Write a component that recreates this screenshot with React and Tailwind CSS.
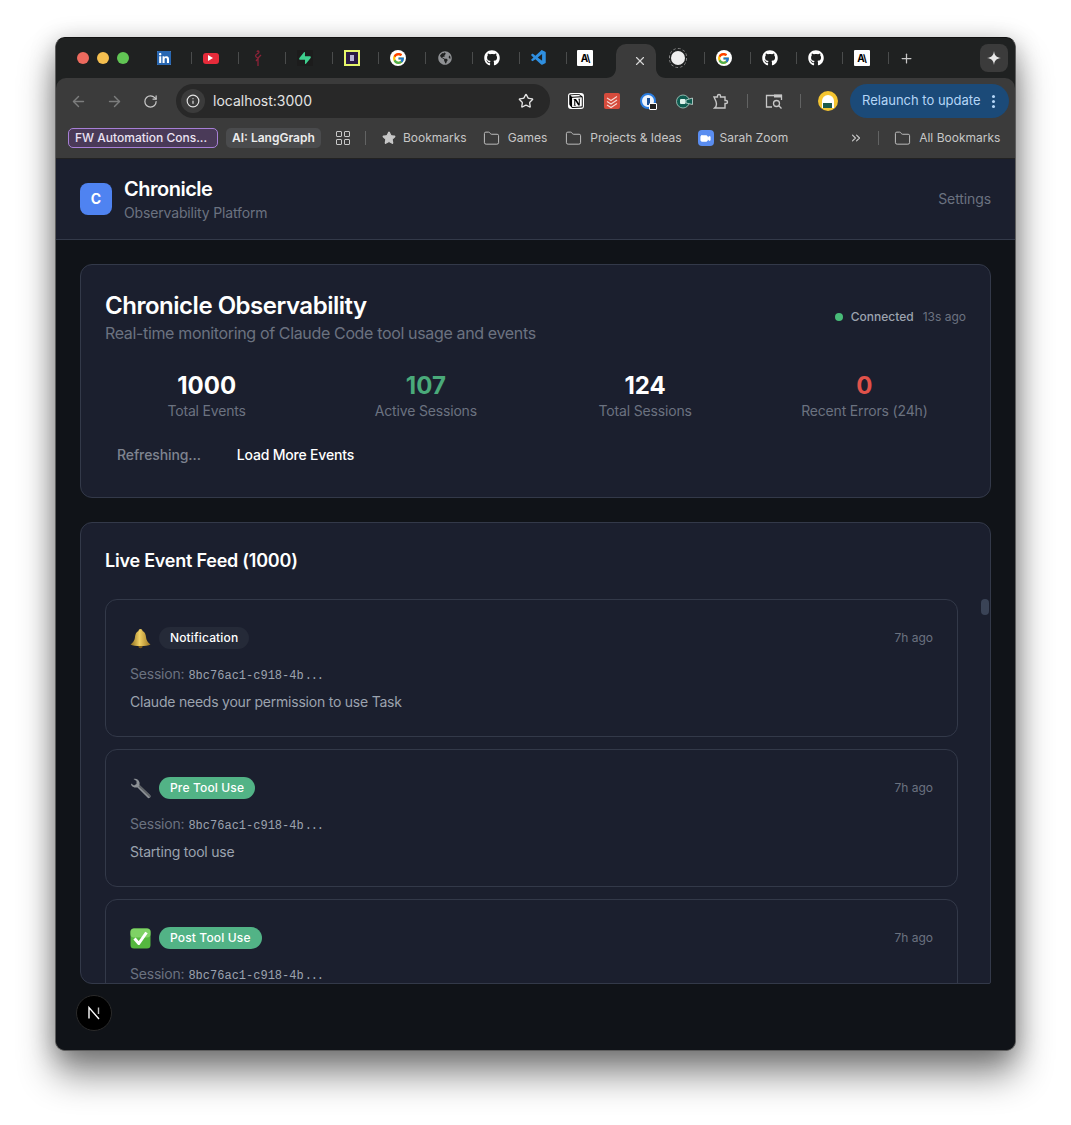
import { ArrowLeft, ArrowRight, RotateCw, Info, Star, Folder, X, Plus, ChevronsRight, Video } from "lucide-react";
import { FaGithub, FaLinkedin, FaGlobeAmericas } from "react-icons/fa";
import { FcGoogle } from "react-icons/fc";
import { SiSupabase, SiNotion } from "react-icons/si";
import { VscVscode } from "react-icons/vsc";

const Youtube = () => (
  <div className="w-4 h-[11px] rounded-[3px] bg-[#e62b3a] flex items-center justify-center">
    <div className="w-0 h-0 border-y-[3px] border-y-transparent border-l-[5px] border-l-white" />
  </div>
);

const Flamingo = () => (
  <svg width="12" height="18" viewBox="0 0 12 18" fill="none" stroke="#8c2338" strokeWidth="1.3">
    <path d="M6 17V9M6.5 9 4 12M6 9C3 8 3 6 5 5L6.5 4C7.5 3 6.5 1.5 5.5 2L5 3" />
    <path d="M6 9 9 6" />
  </svg>
);

const Anthropic = () => (
  <div className="w-4 h-4 rounded-[1px] bg-white text-black flex items-center justify-center text-[10px] font-bold leading-none tracking-[-1px]">
    A\
  </div>
);

const GoogleFav = () => (
  <div className="w-4 h-4 bg-white rounded-full flex items-center justify-center">
    <FcGoogle className="text-[13px]" />
  </div>
);

// tab strip favicon + the divider on its right
const Tab = ({ children, w = "w-[46.9px]", pl = "pl-[10px]", sep = true }) => (
  <div className={`${w} ${pl} h-full flex items-center relative`}>
    <div className="w-[18px] flex justify-center">{children}</div>
    {sep && <div className="absolute right-0 top-[14px] w-px h-[12px] bg-[#4a4c4c]" />}
  </div>
);

const TabStrip = () => (
  <div className="h-[40px] shrink-0 bg-[#1f2121] flex items-end pl-[21px]">
    <div className="h-full flex items-center gap-2 w-[68px] shrink-0">
      <div className="w-3 h-3 rounded-full bg-[#ed6a5e]" />
      <div className="w-3 h-3 rounded-full bg-[#f5bf4f]" />
      <div className="w-3 h-3 rounded-full bg-[#61c554]" />
    </div>
    <div className="h-full flex">
      <Tab><div className="w-[14px] h-[14px] bg-white rounded-[1px] flex items-center justify-center"><FaLinkedin className="text-[#2867b2] text-[16px]" /></div></Tab>
      <Tab><Youtube /></Tab>
      <Tab><Flamingo /></Tab>
      <Tab><div className="w-4 h-4 bg-[#1c1c1c] flex items-center justify-center"><SiSupabase className="text-[#3ecf8e] text-[12px]" /></div></Tab>
      <Tab><div className="w-4 h-4 bg-[#2a1a45] border-2 border-[#e6f56a] flex items-center justify-center"><div className="w-1 h-[6px] bg-[#b9b4d6]" /></div></Tab>
      <Tab><GoogleFav /></Tab>
      <Tab><FaGlobeAmericas className="text-[#8e9093] text-[14px]" /></Tab>
      <Tab><FaGithub className="text-white text-[16px]" /></Tab>
      <Tab><VscVscode className="text-[#2f8fe0] text-[18px]" /></Tab>
      <Tab pl="pl-[9px]" w="w-[48.6px]" sep={false}><Anthropic /></Tab>
    </div>
    <div className="relative w-[40px] h-[34px] bg-[#3b3b3b] rounded-t-[10px] flex items-center justify-end pr-[9px] shrink-0">
      <X size={14} strokeWidth={2} className="text-[#d6d6d6]" />
      <svg className="absolute -left-[10px] bottom-0" width="10" height="10" viewBox="0 0 10 10"><path d="M10 0V10H0C6 10 10 6 10 0Z" fill="#3b3b3b" /></svg>
      <svg className="absolute -right-[10px] bottom-0" width="10" height="10" viewBox="0 0 10 10"><path d="M0 0V10H10C4 10 0 6 0 0Z" fill="#3b3b3b" /></svg>
    </div>
    <div className="h-full flex">
      <Tab w="w-[49px]" pl="pl-[13px]">
        <div className="w-5 h-5 rounded-full border border-dashed border-[#8a8a8a] flex items-center justify-center"><div className="w-[14px] h-[14px] rounded-full bg-[#eeeeee]" /></div>
      </Tab>
      <Tab w="w-[46px]"><GoogleFav /></Tab>
      <Tab w="w-[46px]"><FaGithub className="text-white text-[16px]" /></Tab>
      <Tab w="w-[46px]"><FaGithub className="text-white text-[16px]" /></Tab>
      <Tab w="w-[46px]"><Anthropic /></Tab>
    </div>
    <div className="h-full flex items-center ml-[10px]">
      <Plus size={15} strokeWidth={2} className="text-[#c7c7c7]" />
    </div>
    <div className="ml-auto mr-[7px] mb-[6px] w-[28px] h-[28px] rounded-lg bg-[#3b3b3b] flex items-center justify-center">
      <svg width="14" height="14" viewBox="0 0 14 14">
        <path d="M7 0C7.5 4.5 9.5 6.5 14 7C9.5 7.5 7.5 9.5 7 14C6.5 9.5 4.5 7.5 0 7C4.5 6.5 6.5 4.5 7 0Z" fill="#e8e8e8" />
      </svg>
    </div>
  </div>
);

const ToolSlot = ({ children, w = "w-9" }) => (
  <div className={`${w} h-full flex items-center justify-center shrink-0`}>{children}</div>
);

const Toolbar = () => (
  <div className="h-[46px] shrink-0 bg-[#3b3b3b] rounded-t-[10px] flex items-center pl-[4px]">
    <ToolSlot><ArrowLeft size={17} className="text-[#7c7d7d]" /></ToolSlot>
    <ToolSlot><ArrowRight size={17} className="text-[#7c7d7d]" /></ToolSlot>
    <ToolSlot><RotateCw size={15} className="text-[#c7c7c7]" /></ToolSlot>
    <div className="ml-[8px] w-[374px] h-[34px] rounded-full bg-[#282828] flex items-center pl-[5px] pr-[16px] shrink-0">
      <div className="w-6 h-6 rounded-full bg-[#3b3b3b] flex items-center justify-center">
        <Info size={14} className="text-[#e3e3e3]" />
      </div>
      <span className="ml-[8px] text-sm text-[#e3e3e3]">localhost:3000</span>
      <Star size={16} className="ml-auto text-[#e3e3e3]" />
    </div>
    <div className="w-[8px]" />
    <ToolSlot><div className="w-4 h-4 rounded-[3px] bg-white flex items-center justify-center"><SiNotion className="text-black text-[14px]" /></div></ToolSlot>
    <ToolSlot>
      <svg width="16" height="16" viewBox="0 0 16 16" fill="none">
        <rect width="16" height="16" rx="2" fill="#d64b3c" />
        <path d="M3 5 7 7.5 13 3.5M3 8.5 7 11 13 7M3 12 7 14.5 13 10.5" stroke="#f6d9d4" strokeWidth="1.1" />
      </svg>
    </ToolSlot>
    <ToolSlot>
      <div className="relative w-4 h-4 rounded-full bg-[#eef4fc] border-2 border-[#2a7de1] flex items-center justify-center">
        <div className="w-[3px] h-[7px] bg-[#1b4f94]" />
        <div className="absolute -right-[3px] -bottom-[3px] w-[8px] h-[7px] rounded-[1px] bg-[#222] border border-white" />
      </div>
    </ToolSlot>
    <ToolSlot>
      <svg width="17" height="15" viewBox="0 0 17 15">
        <circle cx="7" cy="7.5" r="6.5" fill="#0f5c50" stroke="#bfe3d8" strokeWidth=".7" />
        <rect x="4" y="5" width="5.5" height="5" rx="1" fill="#dff2ec" />
        <path d="M10 6 16.5 4V10.5L10 9Z" fill="#0f5c50" stroke="#dff2ec" strokeWidth=".7" />
      </svg>
    </ToolSlot>
    <ToolSlot>
      <svg width="17" height="17" viewBox="0 0 17 17" fill="none" stroke="#c7c7c7" strokeWidth="1.4">
        <path d="M2 4H5.5V3C5.5 1 8.5 1 8.5 3V4H13V7.5H14C16 7.5 16 10.5 14 10.5H13V15H2.5L4 13.5C4.6 12 4.6 10 4 8.5Z" />
      </svg>
    </ToolSlot>
    <div className="w-px h-[14px] bg-[#626363] ml-[9px]" />
    <ToolSlot w="w-[52px]">
      <svg width="18" height="17" viewBox="0 0 18 17" fill="none" stroke="#c7c7c7" strokeWidth="1.3">
        <path d="M7 14H1.5V2.5H16.5V7" />
        <rect x="9" y="1.5" width="8" height="3" fill="#c7c7c7" stroke="none" />
        <circle cx="11.5" cy="10.5" r="3" />
        <path d="M13.8 12.8 16.5 15.5" />
      </svg>
    </ToolSlot>
    <div className="w-px h-[14px] bg-[#626363]" />
    <ToolSlot w="w-[49px]">
      <div className="ml-[4px] w-5 h-5 rounded-full bg-[#f5c531] flex items-center justify-center">
        <div className="w-[12px] h-[13px] rounded-t-full rounded-b-[2px] bg-white flex items-end justify-center">
          <div className="w-[9px] h-[5px] bg-[#1e5a4a]" />
        </div>
      </div>
    </ToolSlot>
    <div className="w-[159px] h-[34px] rounded-full bg-[#1b4a78] flex items-center pl-[12px] shrink-0 text-[13px] text-[#b5d6f7]">
      Relaunch to update
      <div className="ml-[11px] flex flex-col gap-[2px]">
        <div className="w-[3px] h-[3px] rounded-full bg-[#b5d6f7]" />
        <div className="w-[3px] h-[3px] rounded-full bg-[#b5d6f7]" />
        <div className="w-[3px] h-[3px] rounded-full bg-[#b5d6f7]" />
      </div>
    </div>
  </div>
);

const Bookmark = ({ icon, label, className = "" }) => (
  <div className={`flex items-center text-xs text-[#c7c7c7] shrink-0 ${className}`}>
    {icon}
    {label}
  </div>
);

const folder = <Folder size={17} strokeWidth={1.3} className="text-[#c7c7c7] mr-[8px]" />;

const BookmarksBar = () => (
  <div className="h-[35px] shrink-0 bg-[#3b3b3b] border-b border-[#222] flex items-center pl-[12px] pb-[6px]">
    <div className="w-[150px] h-[20px] rounded-[5px] bg-[#4a3a58] border border-[#a77fd6] flex items-center pl-[6px] text-xs font-medium text-[#ebe3f2] shrink-0">
      FW Automation Cons...
    </div>
    <div className="ml-[8px] w-[95px] h-[20px] rounded-[5px] bg-[#4a4b4d] flex items-center pl-[6px] text-xs font-semibold text-[#ececec] shrink-0">
      AI: LangGraph
    </div>
    <div className="ml-[15px] w-[14px] h-[14px] grid grid-cols-2 gap-[2px] shrink-0">
      <div className="border-[1.5px] border-[#c7c7c7] rounded-[1px]" />
      <div className="border-[1.5px] border-[#c7c7c7] rounded-[1px]" />
      <div className="border-[1.5px] border-[#c7c7c7] rounded-[1px]" />
      <div className="border-[1.5px] border-[#c7c7c7] rounded-[1px]" />
    </div>
    <div className="ml-[15px] w-px h-[14px] bg-[#626363]" />
    <Bookmark className="ml-[16px]" icon={<Star size={14} fill="#c7c7c7" className="text-[#c7c7c7] mr-[7px]" />} label="Bookmarks" />
    <Bookmark className="ml-[16px]" icon={folder} label="Games" />
    <Bookmark className="ml-[18px]" icon={folder} label="Projects & Ideas" />
    <Bookmark
      className="ml-[16px]"
      icon={
        <div className="w-4 h-4 rounded-[4px] bg-[#5a8df0] flex items-center justify-center mr-[6px]">
          <Video size={11} fill="white" className="text-white" />
        </div>
      }
      label="Sarah Zoom"
    />
    <ChevronsRight size={14} className="ml-[61px] text-[#c7c7c7] shrink-0" />
    <div className="ml-[15px] w-px h-[14px] bg-[#626363]" />
    <Bookmark className="ml-[15px]" icon={folder} label="All Bookmarks" />
  </div>
);

const BellIcon = () => (
  <svg width="21" height="21" viewBox="0 0 21 21">
    <defs>
      <linearGradient id="bell" x1="0" y1="0" x2="1" y2="0">
        <stop offset="0" stopColor="#8a6a1c" />
        <stop offset=".45" stopColor="#f0cf63" />
        <stop offset="1" stopColor="#9b7420" />
      </linearGradient>
    </defs>
    <circle cx="10.5" cy="18" r="2.2" fill="#7d5c1a" />
    <path d="M10.5 1C12 1 12.5 2 12.5 3C15 4 15.8 6.5 16 9C16.2 12 18 15 20.5 16.5C17 18.5 4 18.5.5 16.5C3 15 4.8 12 5 9C5.2 6.5 6 4 8.5 3C8.5 2 9 1 10.5 1Z" fill="url(#bell)" />
  </svg>
);

const WrenchIcon = () => (
  <svg width="21" height="21" viewBox="0 0 21 21">
    <path d="M1 5.5 4 7.5 6.5 6 6.5 3 3.5 1C6 .2 9 1.5 9.5 4.5C9.7 5.5 9.5 6.5 9.5 7L20 17C21 18 20.5 19 20 19.5C19 20.5 18 20.3 17.5 19.5L7.5 9.5C5 10 1 9 1 5.5Z" fill="#8d9196" />
    <path d="M9.5 7 20 17C21 18 20.5 19 20 19.5L8.5 8.5Z" fill="#5f6367" />
  </svg>
);

const CheckIcon = () => (
  <svg width="21" height="21" viewBox="0 0 21 21">
    <rect x=".5" y=".5" width="20" height="20" rx="3.5" fill="#55b83f" />
    <rect x=".5" y=".5" width="20" height="9" rx="3.5" fill="#7fd265" />
    <path d="M4.5 10.5 8.8 15.5 16.5 4.5" fill="none" stroke="white" strokeWidth="3" strokeLinejoin="round" />
  </svg>
);

const events = [
  { icon: <BellIcon />, label: "Notification", badge: "bg-[#252a38]", message: "Claude needs your permission to use Task" },
  { icon: <WrenchIcon />, label: "Pre Tool Use", badge: "bg-[#52b386]", message: "Starting tool use" },
  { icon: <CheckIcon />, label: "Post Tool Use", badge: "bg-[#52b386]" },
];

const EventCard = ({ event }) => (
  <div className="shrink-0 h-[138px] rounded-xl border border-[#333949] px-6 pt-[27px]">
    <div className="flex items-center justify-between h-[22px]">
      <div className="flex items-center gap-2">
        {event.icon}
        <span className={`h-[22px] rounded-full px-[11px] flex items-center text-xs font-medium tracking-[0.15px] text-white ${event.badge}`}>
          {event.label}
        </span>
      </div>
      <span className="text-xs text-[#6b7280]">7h ago</span>
    </div>
    <div className="mt-[15px] h-5 flex items-baseline text-sm tracking-[-0.2px] text-[#6b7280]">
      Session:
      <span className="ml-1 text-xs tracking-normal text-[#9ca3af] font-['Liberation_Mono',monospace]">
        8bc76ac1-c918-4b<span className="ml-[1.2px] tracking-[-1.2px]">...</span>
      </span>
    </div>
    {event.message && <div className="mt-[8px] text-sm leading-5 tracking-[-0.22px] text-[#9ca3af]">{event.message}</div>}
  </div>
);

const Stat = ({ value, label, color = "text-white" }) => (
  <div className="text-center">
    <div className={`mt-[1px] text-2xl leading-8 font-bold ${color}`}>{value}</div>
    <div className="-mt-[1px] text-sm leading-5 tracking-[-0.17px] text-[#6b7280]">{label}</div>
  </div>
);

const Chronicle = () => (
  <div className="flex-1 min-h-0 bg-[#101318] font-['Inter',sans-serif] flex flex-col">
    <header className="h-[81px] shrink-0 bg-[#1b1f2e] border-b border-[#333949] flex items-center justify-between px-6">
      <div className="flex items-center gap-3">
        <div className="w-8 h-8 rounded-lg bg-[#4f83f1] flex items-center justify-center text-sm font-bold text-white">C</div>
        <div>
          <div className="text-xl leading-7 font-semibold tracking-[-0.5px] text-white">Chronicle</div>
          <div className="text-sm leading-5 tracking-[-0.15px] text-[#6b7280]">Observability Platform</div>
        </div>
      </div>
      <span className="text-sm tracking-[-0.1px] text-[#6b7280]">Settings</span>
    </header>

    <main className="px-6 pt-6 flex flex-col gap-6">
      <section className="h-[234px] rounded-xl bg-[#1b1f2e] border border-[#333949] px-6 pt-6">
        <div className="flex items-center justify-between">
          <div>
            <h1 className="mt-[1px] text-2xl leading-8 font-semibold tracking-[-0.48px] text-white">Chronicle Observability</h1>
            <p className="-mt-[1px] text-base leading-6 tracking-[-0.35px] text-[#6b7280]">Real-time monitoring of Claude Code tool usage and events</p>
          </div>
          <div className="flex items-center text-xs">
            <div className="w-2 h-2 rounded-full bg-[#48bb78] mr-2" />
            <span className="font-medium text-[#9ca3af]">Connected</span>
            <span className="ml-[9px] text-[#6b7280]">13s ago</span>
          </div>
        </div>
        <div className="mt-6 grid grid-cols-4 gap-4">
          <Stat value="1000" label="Total Events" />
          <Stat value="107" label="Active Sessions" color="text-[#4aaa7a]" />
          <Stat value="124" label="Total Sessions" />
          <Stat value="0" label="Recent Errors (24h)" color="text-[#e0524a]" />
        </div>
        <div className="mt-4 flex gap-3 text-sm leading-5">
          <button className="px-3 py-2 font-medium tracking-[-0.1px] text-[#7f8490]">Refreshing...</button>
          <button className="px-3 py-2 font-medium tracking-[-0.19px] text-white">Load More Events</button>
        </div>
      </section>

      <section className="relative h-[462px] rounded-xl rounded-br-[2px] bg-[#1b1f2e] border border-[#333949] pl-6 pr-8 overflow-hidden">
        <h2 className="pt-6 h-[76px] text-lg leading-7 font-semibold tracking-[-0.23px] text-white">Live Event Feed (1000)</h2>
        <div className="h-[385px] overflow-hidden flex flex-col gap-3">
          {events.map((e) => (
            <EventCard key={e.label} event={e} />
          ))}
        </div>
        <div className="absolute right-[1px] top-[76px] w-2 h-4 rounded-full bg-[#3a4356]" />
      </section>
    </main>

    <div className="mt-[11px] ml-5 w-9 h-9 rounded-full bg-black border border-[#2a2a2a] flex items-center justify-center shrink-0">
      <svg width="16" height="16" viewBox="0 0 16 16" fill="none">
        <path d="M3 13.5V2.5L13 14" stroke="white" strokeWidth="1.4" />
        <path d="M12.5 2.5V9" stroke="#bbbbbb" strokeWidth="1.4" />
      </svg>
    </div>
  </div>
);

export default function App() {
  return (
    <div className="w-[1071px] h-[1125px] bg-white pl-[55px] pt-[37px] overflow-hidden font-['Inter',sans-serif]">
      <div className="w-[961px] h-[1014px] rounded-[10px] overflow-hidden border border-[#5e5e5e] border-t-[#111] shadow-[0_24px_36px_rgba(0,0,0,0.45),0_4px_24px_rgba(0,0,0,0.25)] flex flex-col bg-[#1f2121]">
        <TabStrip />
        <Toolbar />
        <BookmarksBar />
        <Chronicle />
      </div>
    </div>
  );
}
